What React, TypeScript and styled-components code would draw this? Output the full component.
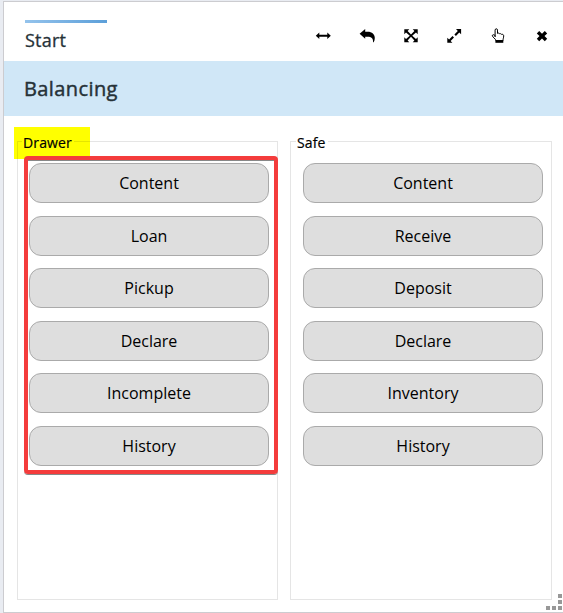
import React from "react";
import styled, { createGlobalStyle } from "styled-components";

const GlobalStyle = createGlobalStyle`
  *, *::before, *::after { box-sizing: border-box; }
  body { margin: 0; background: #e9ecf2; font-family: "Open Sans", "Noto Sans", sans-serif; }
`;

const Window = styled.main`
  position: relative;
  height: 612px;
  margin: 1px 0 0 3px;
  border: 1px solid #ccccd0;
  border-right: 0;
  background: #fff;
  overflow: hidden;
`;

const Header = styled.header`
  display: flex;
  justify-content: space-between;
  height: 59px;
  padding: 18px 13px 0 21px;
`;

const StartTab = styled.div`
  width: 82px;
  font-size: 18px;
  font-weight: 500;
  letter-spacing: 0.2px;
  line-height: 24px;
  color: #263238;
  -webkit-text-stroke: 0.3px #263238;
  &::before {
    content: "";
    display: block;
    height: 3px;
    margin-bottom: 5px;
    background: linear-gradient(90deg, #94c3ec, #5c9fd9);
  }
`;

const Toolbar = styled.nav`
  display: flex;
  gap: 27.8px;
  padding-top: 8px;
`;

const IconButton = styled.button`
  width: 16px;
  height: 16px;
  padding: 0;
  border: 0;
  background: none;
  color: #000;
  svg { display: block; width: 16px; height: 16px; overflow: visible; }
`;

const TitleBand = styled.h1`
  height: 55px;
  margin: 0;
  padding-left: 20px;
  background: #d0e7f7;
  color: #263238;
  font-size: 20px;
  font-weight: 500;
  letter-spacing: 0.4px;
  line-height: 55px;
  -webkit-text-stroke: 0.45px #263238;
`;

const Groups = styled.div`
  display: grid;
  grid-template-columns: 261px 262px;
  gap: 12px;
  padding: 25px 0 0 13px;
`;

const Group = styled.section`
  position: relative;
  height: 459px;
  padding: 21px 8px 0 11px;
  border: 1px solid #e5e5e5;
`;

const Legend = styled.h2<{ $marked?: boolean }>`
  position: absolute;
  z-index: 2;
  top: -10px;
  left: ${(p) => (p.$marked ? 4 : 5)}px;
  margin: 0;
  padding: 0 2px 0 1px;
  background: ${(p) => (p.$marked ? "#ff0" : "#fff")};
  color: #000;
  font-size: 14px;
  font-weight: 500;
  letter-spacing: 0.15px;
  line-height: 21px;
  -webkit-text-stroke: 0.2px #000;
  ${(p) => p.$marked && "height: 24px; clip-path: inset(0 0 7px 0);"}
`;

const Highlight = styled.div`
  position: absolute;
  top: -15px;
  left: -4px;
  width: 76px;
  height: 32px;
  background: #ff0;
  &::after {
    content: "";
    position: absolute;
    top: 14px;
    left: 3px;
    right: 0;
    height: 18px;
    border: solid #e5e500;
    border-width: 1px 0 0 1px;
  }
`;

const Callout = styled.div`
  position: absolute;
  top: 14px;
  left: 6px;
  width: 254px;
  height: 318px;
  border: 4px solid #f43c3c;
  border-radius: 4px;
  box-shadow: 0 1px 0 #888, inset 0 1px 0 #888;
`;

const Buttons = styled.div<{ $offset: number }>`
  position: relative;
  display: grid;
  grid-auto-rows: 40px;
  gap: 12.6px;
  width: 240px;
  margin-left: ${(p) => p.$offset}px;
`;

const ActionButton = styled.button`
  padding: 0;
  border: 1px solid #aaa;
  border-radius: 12px;
  background: #dedede;
  color: #000;
  font: 16px/38px "Open Sans", "Noto Sans", sans-serif;
`;

const ResizeGrip = styled.div`
  position: absolute;
  right: 1px;
  bottom: 2px;
  display: grid;
  grid-template-columns: repeat(3, 4px);
  grid-auto-rows: 4px;
  gap: 2px;
  span { background: #989898; }
  span:nth-child(-n + 2) { grid-column: 3; }
`;

const icons: { name: string; art: React.ReactNode }[] = [
  {
    name: "Widen",
    art: <path d="M.8 7.8 4.3 4.5v2.3h8V4.5l3.5 3.3-3.5 3.3V8.8h-8v2.3z" />,
  },
  {
    name: "Back",
    art: <path d="M.6 5.8 6.2 1v2.8h2.4c4.5 0 7.2 2.5 7.2 6.3 0 1.5-.4 2.9-1.1 4.1h-.6c.2-3.8-1.8-5.5-5.5-5.5H6.2v2z" />,
  },
  {
    name: "Maximize",
    art: (
      <path d="M1.3 1.2h5L4.6 2.9 8 6.6l3.4-3.7-1.7-1.7h5v5L13 4.5 9.2 7.7l3.8 3.2 1.7-1.7v5h-5l1.7-1.7L8 8.8l-3.4 3.7 1.7 1.7h-5v-5L3 10.9l3.8-3.2L3 4.5 1.3 6.2z" />
    ),
  },
  {
    name: "Expand",
    art: <path d="M10 1.1h5.1v5.1l-1.8-1.7-3.4 3.4-1.5-1.5 3.4-3.5zM1.3 9.7l1.8 1.8 3.4-3.4L8 9.6 4.6 13l1.8 1.8H1.3z" />,
  },
  {
    name: "Pointer",
    art: (
      <>
        <path
          d="M5.1 8.8V2.1c0-1.8 2.4-1.8 2.4 0v3.3c.8-.6 1.8-.3 2.1.4.9-.4 1.7 0 2 .6 1.2-.4 2.1.3 2.1 1.5 0 2-.7 2.5-.7 4.8H5.9c0-1.9-3.6-3.7-3.6-4.9 0-1.2 1.4-1.6 2.8-.2z"
          fill="#fff"
          stroke="currentColor"
          strokeWidth="1"
          strokeLinejoin="round"
        />
        <path d="M5.4 12.1h7.9v2.7H5.4z" />
      </>
    ),
  },
  {
    name: "Close",
    art: <path d="M5.2 3 8 5.8 10.8 3 13.2 5.4 10.5 8.1l2.7 2.7-2.4 2.4L8 10.4l-2.8 2.8-2.4-2.4 2.7-2.7-2.7-2.7z" />,
  },
];

const drawerActions = ["Content", "Loan", "Pickup", "Declare", "Incomplete", "History"];
const safeActions = ["Content", "Receive", "Deposit", "Declare", "Inventory", "History"];

export default function App() {
  return (
    <>
      <GlobalStyle />
      <Window>
        <Header>
          <StartTab>Start</StartTab>
          <Toolbar>
            {icons.map(({ name, art }) => (
              <IconButton key={name} aria-label={name}>
                <svg viewBox="0 0 16 16" fill="currentColor">{art}</svg>
              </IconButton>
            ))}
          </Toolbar>
        </Header>
        <TitleBand>Balancing</TitleBand>
        <Groups>
          <Group>
            <Highlight />
            <Legend $marked>Drawer</Legend>
            <Callout />
            <Buttons $offset={0}>
              {drawerActions.map((label) => <ActionButton key={label}>{label}</ActionButton>)}
            </Buttons>
          </Group>
          <Group>
            <Legend>Safe</Legend>
            <Buttons $offset={1}>
              {safeActions.map((label) => <ActionButton key={label}>{label}</ActionButton>)}
            </Buttons>
          </Group>
        </Groups>
        <ResizeGrip><span /><span /><span /><span /><span /></ResizeGrip>
      </Window>
    </>
  );
}
